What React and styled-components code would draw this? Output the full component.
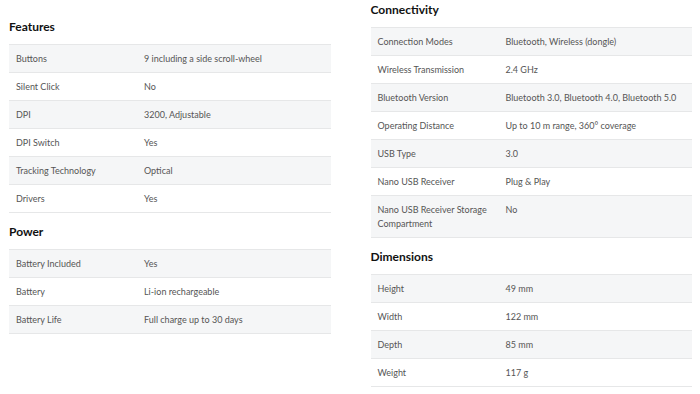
import React from "react";
import styled, { createGlobalStyle } from "styled-components";

const Global = createGlobalStyle`
  html, body { margin: 0; padding: 0; background: #fff; }
  body { font-family: Lato, "Open Sans", sans-serif; }
`;

const Page = styled.div`
  display: grid;
  grid-template-columns: 1fr 1fr;
  column-gap: 40px;
  padding: 0 8px 0 9px;
  align-items: start;
`;

const Column = styled.div`
  display: flex;
  flex-direction: column;
  padding-top: ${(p) => p.$offset || 0}px;
`;

const Heading = styled.h3`
  margin: ${(p) => (p.$first ? 0 : 11)}px 0 9px;
  font-size: 12px;
  line-height: 16px;
  font-weight: 700;
  color: #111;
`;

const Table = styled.div`
  border-top: 1px solid #e6e7e8;
`;

const Row = styled.div`
  display: grid;
  grid-template-columns: 128px 1fr;
  background: ${(p) => (p.$alt ? "#f5f6f7" : "#fff")};
  border-bottom: 1px solid #e6e7e8;
`;

const Cell = styled.div`
  padding: 6.5px 7px;
  font-size: 9px;
  line-height: 14px;
  color: #555;
`;

const data = {
  left: [
    {
      title: "Features",
      rows: [
        ["Buttons", "9 including a side scroll-wheel"],
        ["Silent Click", "No"],
        ["DPI", "3200, Adjustable"],
        ["DPI Switch", "Yes"],
        ["Tracking Technology", "Optical"],
        ["Drivers", "Yes"],
      ],
    },
    {
      title: "Power",
      rows: [
        ["Battery Included", "Yes"],
        ["Battery", "Li-ion rechargeable"],
        ["Battery Life", "Full charge up to 30 days"],
      ],
    },
  ],
  right: [
    {
      title: "Connectivity",
      rows: [
        ["Connection Modes", "Bluetooth, Wireless (dongle)"],
        ["Wireless Transmission", "2.4 GHz"],
        ["Bluetooth Version", "Bluetooth 3.0, Bluetooth 4.0, Bluetooth 5.0"],
        ["Operating Distance", "Up to 10 m range, 360° coverage"],
        ["USB Type", "3.0"],
        ["Nano USB Receiver", "Plug & Play"],
        ["Nano USB Receiver Storage Compartment", "No"],
      ],
    },
    {
      title: "Dimensions",
      rows: [
        ["Height", "49 mm"],
        ["Width", "122 mm"],
        ["Depth", "85 mm"],
        ["Weight", "117 g"],
      ],
    },
  ],
};

function Section({ title, rows, first }) {
  return (
    <>
      <Heading $first={first}>{title}</Heading>
      <Table>
        {rows.map(([k, v], i) => (
          <Row key={k} $alt={i % 2 === 0}>
            <Cell>{k}</Cell>
            <Cell>{v}</Cell>
          </Row>
        ))}
      </Table>
    </>
  );
}

export default function App() {
  return (
    <>
      <Global />
      <Page>
        <Column $offset={19}>
          {data.left.map((s, i) => (
            <Section key={s.title} {...s} first={i === 0} />
          ))}
        </Column>
        <Column $offset={2}>
          {data.right.map((s, i) => (
            <Section key={s.title} {...s} first={i === 0} />
          ))}
        </Column>
      </Page>
    </>
  );
}
